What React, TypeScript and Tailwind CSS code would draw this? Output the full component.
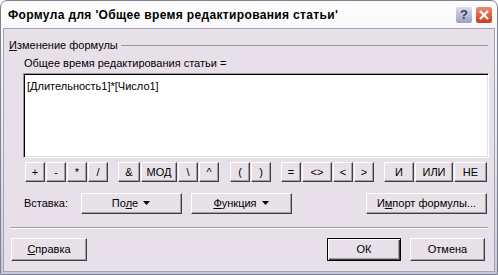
import type { ReactNode } from "react";

const btn3d =
  "flex items-center justify-center border border-t-white border-l-white border-r-[#404040] border-b-[#404040] shadow-[inset_-1px_-1px_0_#a49ea4] bg-[#e8e1e8] text-black";

function Btn({ w, h = 20, children, className = "" }: { w: number; h?: number; children: ReactNode; className?: string }) {
  return (
    <div className={`${btn3d} ${className}`} style={{ width: w, height: h }}>
      {children}
    </div>
  );
}

function Arrow() {
  return (
    <svg width="8" height="5" viewBox="0 0 8 5" className="ml-[5px]">
      <path d="M0 0h7L3.5 4z" fill="#000" />
    </svg>
  );
}

export default function App() {
  const ops1 = [
    ["+", 20],
    ["-", 20],
    ["*", 20],
    ["/", 20],
  ] as const;
  const ops2 = [
    ["&", 22],
    ["МОД", 36],
    ["\\", 20],
    ["^", 20],
  ] as const;
  const ops3 = [
    ["(", 20],
    [")", 20],
  ] as const;
  const ops4 = [
    ["=", 20],
    ["<>", 30],
    ["<", 20],
    [">", 20],
  ] as const;
  const ops5 = [
    ["И", 30],
    ["ИЛИ", 38],
    ["НЕ", 33],
  ] as const;

  const group = (items: readonly (readonly [string, number])[], ml: number) => (
    <div className="flex gap-[1px]" style={{ marginLeft: ml }}>
      {items.map(([t, w]) => (
        <Btn key={t} w={w}>
          {t}
        </Btn>
      ))}
    </div>
  );

  return (
    <div className="w-[498px] h-[275px] font-['Liberation_Sans',Arial,sans-serif] text-[11px] text-black bg-white">
      <div className="w-full h-full flex flex-col border border-[#7f7f94] rounded-t-[7px] bg-gradient-to-b from-[#fdfdfe] via-[#e9e9ef] to-[#c9c9d6] overflow-hidden">
        {/* title bar */}
        <div className="h-[27px] flex items-center pl-[7px] pr-[4px]">
          <span className="font-bold text-[12px] tracking-[0.35px] text-black">
            Формула для 'Общее время редактирования статьи'
          </span>
          <div className="ml-auto flex gap-[2px]">
            <div className="w-[18px] h-[18px] rounded-[3px] border border-white bg-gradient-to-b from-[#dcdeea] to-[#9ca2bf] flex items-center justify-center font-bold text-[13px] text-[#3d4060]">
              ?
            </div>
            <div className="w-[18px] h-[18px] rounded-[3px] border border-white bg-gradient-to-b from-[#ee8a72] to-[#c93b22] flex items-center justify-center">
              <svg width="10" height="10" viewBox="0 0 10 10">
                <path d="M1 1L9 9M9 1L1 9" stroke="#fff" strokeWidth="2.2" />
              </svg>
            </div>
          </div>
        </div>

        {/* client area */}
        <div className="flex-1 mx-[2px] mb-[2px] border border-[#a3a3b6] bg-[#e8e0e8] flex flex-col">
          <div className="mt-[10px] ml-[5px] mr-[6px] h-[13px] flex items-center">
            <span>
              <u>И</u>зменение формулы
            </span>
            <div className="flex-1 ml-[3px] h-[1px] bg-[#9c989c]" />
          </div>

          <div className="ml-[20px] mt-[5px] h-[13px] leading-[13px]">Общее время редактирования статьи =</div>

          <div className="ml-[19px] mt-[3px] w-[466px] h-[85px] bg-white border border-t-[#9a969a] border-l-[#9a969a] border-r-white border-b-white shadow-[inset_1px_1px_0_#000,inset_-1px_-1px_0_#e2dee2] pl-[3px] pt-[4px] text-[11px]">
            [Длительность1]*[Число1]
          </div>

          <div className="mt-[4px] flex">
            {group(ops1, 21)}
            {group(ops2, 10)}
            {group(ops3, 11)}
            {group(ops4, 10)}
            {group(ops5, 10)}
          </div>

          <div className="mt-[11px] flex items-center">
            <span className="ml-[20px] w-[57px]">Вставка:</span>
            <Btn w={101} h={21}>
              <span>
                По<u>л</u>е
              </span>
              <Arrow />
            </Btn>
            <Btn w={101} h={21} className="ml-[9px]">
              <span>
                <u>Ф</u>ункция
              </span>
              <Arrow />
            </Btn>
            <Btn w={121} h={21} className="ml-[74px]">
              <span>
                И<u>м</u>порт формулы...
              </span>
            </Btn>
          </div>

          <div className="mt-[13px] ml-[6px] w-[478px] h-[2px] border-t border-[#a09ca0] border-b border-b-white" />

          <div className="mt-[9px] flex">
            <Btn w={76} h={23} className="ml-[7px]">
              <span>
                <u>С</u>правка
              </span>
            </Btn>
            <div className="ml-[240px] w-[74px] h-[23px] flex items-center justify-center border border-black bg-[#e8e0e8] shadow-[inset_1px_1px_0_#fff,inset_-1px_-1px_0_#404040,inset_-2px_-2px_0_#a49ea4]">
              ОК
            </div>
            <Btn w={75} h={23} className="ml-[9px]">
              Отмена
            </Btn>
          </div>
        </div>
      </div>
    </div>
  );
}
